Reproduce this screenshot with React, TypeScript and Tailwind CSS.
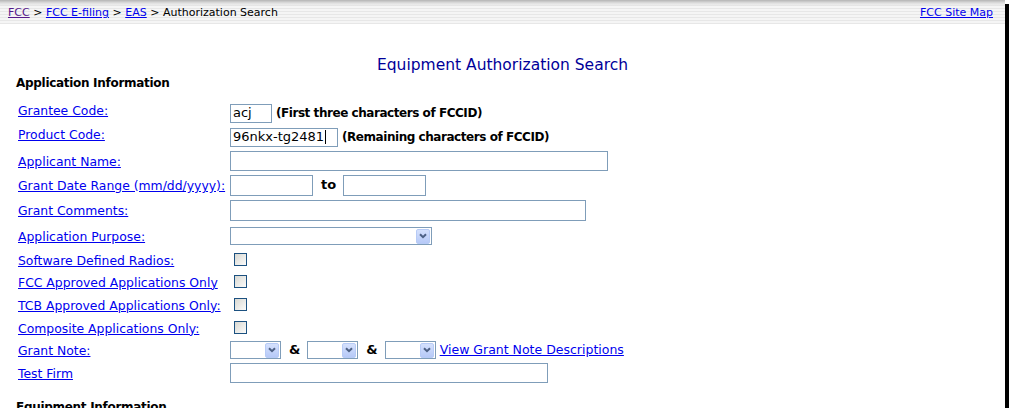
import React from "react";

function TextBox({ w, h = "h-[20px]", value, caret }: { w: string; h?: string; value?: string; caret?: boolean }) {
  return (
    <div className={`flex ${w} ${h} items-center border border-[#7f9db9] bg-white pl-[2px] text-[13px] text-black`}>
      {value && <span className="leading-[16px]">{value}</span>}
      {caret && <span className="ml-[1px] h-[14px] w-px bg-black" />}
    </div>
  );
}

function Combo({ w }: { w: string }) {
  return (
    <div className={`flex ${w} h-[18px] items-center justify-end border border-[#7f9db9] bg-white p-px`}>
      <div className="flex h-[15px] w-[14px] items-center justify-center rounded-[2px] border border-[#b7cbf6] bg-[linear-gradient(180deg,#d5e1fd,#b6c9f7)]">
        <svg width="8" height="6" viewBox="0 0 8 6">
          <path d="M1 1.2 L4 4.2 L7 1.2" fill="none" stroke="#4d6185" strokeWidth="2" />
        </svg>
      </div>
    </div>
  );
}

function Check() {
  return (
    <div className="ml-[4px] h-[13px] w-[13px] border border-[#1c5180] bg-[linear-gradient(135deg,#d8d8d2,#fbfbfa)]" />
  );
}

const link = "text-[#0000ee] underline";

const rows: Array<{ label: string; h: string; lift: string; control: React.ReactNode }> = [
  {
    label: "Grantee Code:",
    h: "h-[24px]",
    lift: "-translate-y-[2px]",
    control: (
      <div className="flex items-center gap-[4px]">
        <TextBox w="w-[42px]" h="h-[19px]" value="acj" />
        <span className="text-[12px] font-bold tracking-[-0.45px]">(First three characters of FCCID)</span>
      </div>
    ),
  },
  {
    label: "Product Code:",
    h: "h-[24px]",
    lift: "-translate-y-[2px]",
    control: (
      <div className="flex items-center gap-[4px]">
        <TextBox w="w-[108px]" h="h-[19px]" value="96nkx-tg2481" caret />
        <span className="text-[12px] font-bold tracking-[-0.45px]">(Remaining characters of FCCID)</span>
      </div>
    ),
  },
  { label: "Applicant Name:", h: "h-[24px]", lift: "translate-y-[1px]", control: <TextBox w="w-[378px]" /> },
  {
    label: "Grant Date Range (mm/dd/yyyy):",
    h: "h-[24px]",
    lift: "translate-y-[1px]",
    control: (
      <div className="flex items-center">
        <TextBox w="w-[83px]" h="h-[21px]" />
        <span className="ml-[8px] mr-[7px] text-[13px] font-bold">to</span>
        <TextBox w="w-[83px]" h="h-[21px]" />
      </div>
    ),
  },
  { label: "Grant Comments:", h: "h-[26px]", lift: "translate-y-[1px]", control: <TextBox w="w-[356px]" h="h-[21px]" /> },
  { label: "Application Purpose:", h: "h-[26px]", lift: "translate-y-[1px]", control: <Combo w="w-[202px]" /> },
  { label: "Software Defined Radios:", h: "h-[21px]", lift: "translate-y-[1px]", control: <Check /> },
  { label: "FCC Approved Applications Only", h: "h-[23px]", lift: "translate-y-[1px]", control: <Check /> },
  { label: "TCB Approved Applications Only:", h: "h-[23px]", lift: "translate-y-[1px]", control: <Check /> },
  { label: "Composite Applications Only:", h: "h-[23px]", lift: "translate-y-[1px]", control: <Check /> },
  {
    label: "Grant Note:",
    h: "h-[22px]",
    lift: "translate-y-[1px]",
    control: (
      <div className="flex items-center">
        <Combo w="w-[51px]" />
        <span className="ml-[8px] mr-[7px] text-[13px] font-bold">&amp;</span>
        <Combo w="w-[51px]" />
        <span className="ml-[8px] mr-[7px] text-[13px] font-bold">&amp;</span>
        <Combo w="w-[51px]" />
        <a className={`ml-[4px] text-[12.5px] ${link}`}>View Grant Note Descriptions</a>
      </div>
    ),
  },
  { label: "Test Firm", h: "h-[24px]", lift: "translate-y-[1px]", control: <TextBox w="w-[318px]" /> },
];

export default function App() {
  return (
    <div className="flex h-[408px] overflow-hidden bg-white font-['DejaVu_Sans',Verdana,sans-serif] text-black">
      <div className="flex-1">
        <div className="flex h-[24px] items-start justify-between bg-[linear-gradient(180deg,#b4b4b4_0px,#dedede_3px,rgba(240,240,240,0)_6px),repeating-linear-gradient(180deg,#f5f5f5_0px,#f5f5f5_2px,#e7e7e7_2px,#e7e7e7_3px)] px-[8px] pt-[6px] text-[11px] leading-[14px]">
          <div className="whitespace-nowrap">
            <a className="text-[#551a8b] underline">FCC</a> &gt; <a className={link}>FCC E-filing</a> &gt;{" "}
            <a className={link}>EAS</a> &gt; Authorization Search
          </div>
          <a className={`mr-[4px] whitespace-nowrap ${link}`}>FCC Site Map</a>
        </div>

        <h1 className="mt-[32px] text-center text-[15.5px] leading-[18px] text-[#000099]">Equipment Authorization Search</h1>

        <h2 className="ml-[16px] mt-[1px] text-[12px] font-bold leading-[16px] tracking-[-0.3px]">Application Information</h2>

        <div className="mt-[10px] pl-[18px]">
          {rows.map((r) => (
            <div key={r.label} className={`flex ${r.h} items-center`}>
              <div className="w-[212px] whitespace-nowrap text-[12.4px] leading-[16px]">
                <a className={`inline-block ${r.lift} ${link}`}>{r.label}</a>
              </div>
              {r.control}
            </div>
          ))}
        </div>

        <h2 className="ml-[16px] mt-[14px] text-[12px] font-bold leading-[16px] tracking-[-0.3px]">Equipment Information</h2>
      </div>
      <div className="mt-[4px] w-[4px] bg-black" />
    </div>
  );
}
